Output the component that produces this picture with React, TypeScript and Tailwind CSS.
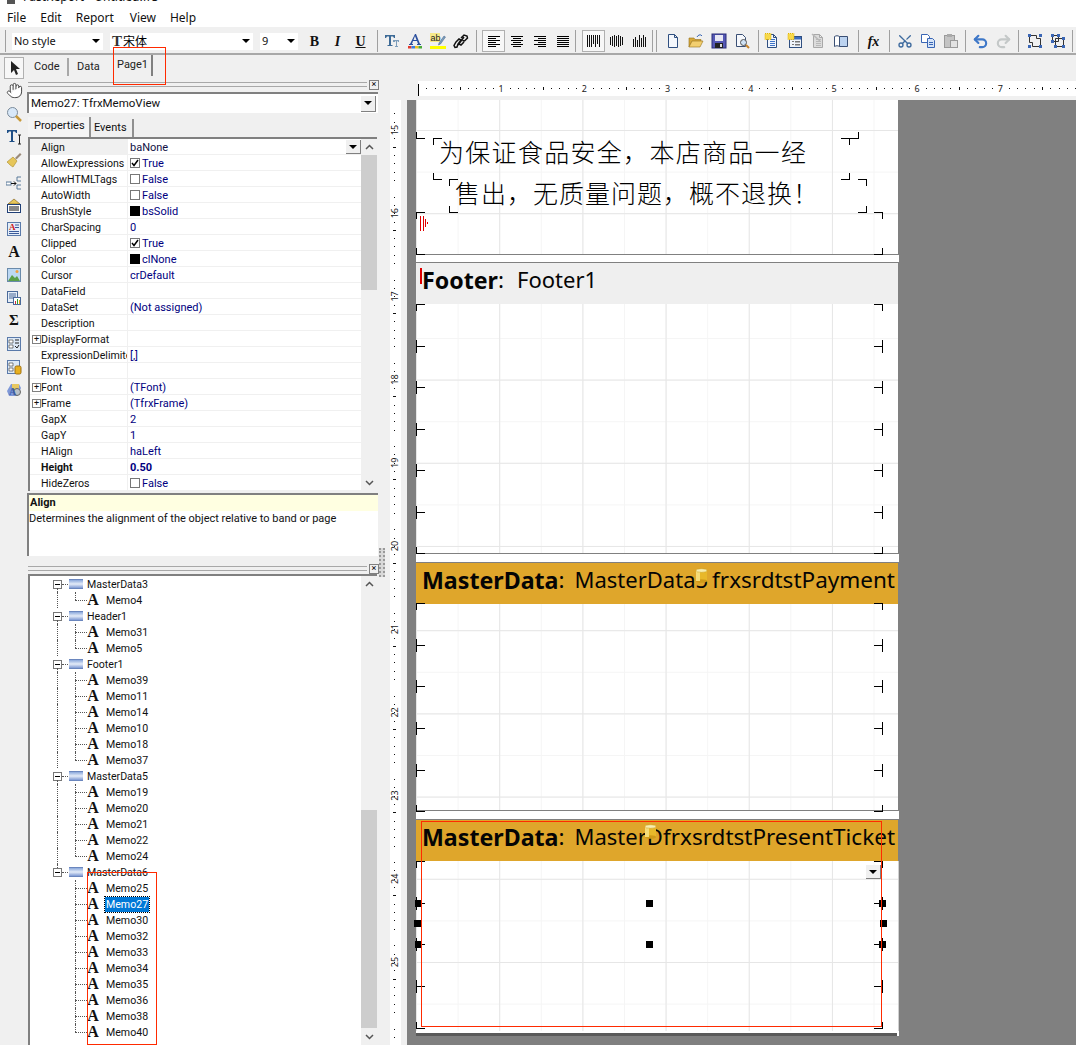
import type { ReactNode } from 'react'
import { Hand, Undo2, Redo2, Scissors } from 'lucide-react'

const GRID =
  'bg-[linear-gradient(to_right,#e6e6e6_1px,transparent_1px),linear-gradient(to_bottom,#e6e6e6_1px,transparent_1px),linear-gradient(to_right,#f5f5f5_1px,transparent_1px),linear-gradient(to_bottom,#f5f5f5_1px,transparent_1px)] bg-[size:83.2px_83.2px,83.2px_83.2px,41.6px_41.6px,41.6px_41.6px]'

function Ico({ children, size = 16 }: { children: ReactNode; size?: number }) {
  return (
    <svg width={size} height={size} viewBox="0 0 16 16" className="block">
      {children}
    </svg>
  )
}

function Btn({ children, active }: { children: ReactNode; active?: boolean }) {
  return (
    <div
      className={
        'w-[23px] h-[22px] shrink-0 flex items-center justify-center ' +
        (active ? 'bg-[#f7f7f7] border border-[#b0b0b0]' : '')
      }
    >
      {children}
    </div>
  )
}

function Sep({ className }: { className: string }) {
  return <div className={'w-px h-[22px] shrink-0 bg-[#a0a0a0] ' + className} />
}

function Arrow() {
  return <div className="w-0 h-0 border-x-[4px] border-x-transparent border-t-[4px] border-t-black" />
}

function Combo({ className, children }: { className: string; children: ReactNode }) {
  return (
    <div className={'h-[17px] bg-white flex items-center justify-between pr-[3px] shrink-0 ' + className}>
      <div className="flex items-center pl-[2px] text-[11px] text-[#111]">{children}</div>
      <Arrow />
    </div>
  )
}

function AlignIcon({ kind }: { kind: 'l' | 'c' | 'r' | 'j' }) {
  const rows = [12, 8, 12, 8, 12, 8]
  return (
    <Ico>
      {rows.map((w, i) => {
        const width = kind === 'j' ? 12 : w
        const x = kind === 'l' || kind === 'j' ? 2 : kind === 'c' ? 8 - width / 2 : 14 - width
        return <rect key={i} x={x} y={3 + i * 2} width={width} height={1} fill="#000" />
      })}
    </Ico>
  )
}

function BarIcon({ bars }: { bars: number[][] }) {
  return (
    <Ico>
      {bars.map(([x, y, h, w], i) => (
        <rect key={i} x={x} y={y} width={w} height={h} fill="#111" />
      ))}
    </Ico>
  )
}

function Doc({ fill = '#fff', stroke = '#2f4f80' }: { fill?: string; stroke?: string }) {
  return <path d="M3.5 1.5h6l3 3v10h-9z M9.5 1.5v3h3" fill={fill} stroke={stroke} />
}

function Star() {
  return <rect x="1" y="0.5" width="6" height="6" fill="#f7d94c" stroke="#e2b400" strokeDasharray="1 1" />
}

function Lines({ color = '#3f74c8' }: { color?: string }) {
  return (
    <>
      <rect x="6" y="6" width="5" height="1" fill={color} />
      <rect x="6" y="8" width="5" height="1" fill={color} />
      <rect x="6" y="10" width="5" height="1" fill={color} />
      <rect x="6" y="12" width="5" height="1" fill={color} />
    </>
  )
}

function GroupIcon({ split }: { split?: boolean }) {
  const pts = split
    ? [[1, 1], [7, 1], [1, 7], [12, 4], [4, 12], [12, 12]]
    : [[1, 1], [12, 1], [1, 12], [12, 12]]
  return (
    <Ico>
      {split ? (
        <path d="M2.5 2.5h6v6h-6z M5.5 5.5h8v8h-8z" fill="none" stroke="#333" />
      ) : (
        <path d="M2.5 2.5h7v3h4v8h-8v-4h-3z" fill="none" stroke="#333" />
      )}
      {pts.map(([x, y], i) => (
        <rect key={i} x={x} y={y} width={3} height={3} fill="#3a66b5" />
      ))}
    </Ico>
  )
}

function Toolbar() {
  return (
    <div className="h-[28px] shrink-0 flex items-center pt-[2px] border-b-2 border-[#a8a8a8] bg-[#f0f0f0]">
      <div className="ml-[5px] mr-[5px] w-[2px] h-[22px] border-l border-[#a0a0a0] shrink-0" />
      <Combo className="w-[91px]">No style</Combo>
      <Combo className="w-[143px] ml-[7px]">
        <span className="text-[15px] leading-none font-bold text-[#333] [font-family:'Liberation_Serif',serif] mr-px">T</span>
        <span className="text-[12px] text-black [font-family:'Noto_Sans_CJK_SC',sans-serif]">宋体</span>
      </Combo>
      <Combo className="w-[38px] ml-[7px]">9</Combo>
      <div className="w-[5px] shrink-0" />
      <Btn><span className="[font-family:'Liberation_Serif',serif] font-bold text-[14px] text-[#111]">B</span></Btn>
      <Btn><span className="[font-family:'Liberation_Serif',serif] font-bold italic text-[14px] text-[#111]">I</span></Btn>
      <Btn><span className="[font-family:'Liberation_Serif',serif] font-bold underline text-[14px] text-[#111]">U</span></Btn>
      <Sep className="ml-[5px] mr-[2px]" />
      <Btn>
        <Ico>
          <path d="M1 2h10v3h-1l-1-1.500H7V12h1.500v1h-5v-1H5V3.500H3L2 5H1z" fill="#3d6a96" />
          <path d="M9 7h6v2h-1l-.5-1H13v5h1v1h-3v-1h1V8h-.5L11 9h-2z" fill="#7d9dbb" />
        </Ico>
      </Btn>
      <Btn>
        <Ico>
          <path d="M8 1h1l4 10h1v1h-4v-1h1l-1-3H6l-1 3h1v1H2v-1h1zM6.500 7h3L8 3z" fill="#2b4f9e" />
          <rect x="1" y="13" width="3.500" height="2.500" fill="#e23b2e" />
          <rect x="4.500" y="13" width="3.500" height="2.500" fill="#3a7de0" />
          <rect x="8" y="13" width="3.500" height="2.500" fill="#f0c020" />
          <rect x="11.500" y="13" width="3.500" height="2.500" fill="#4caa3a" />
        </Ico>
      </Btn>
      <Btn>
        <svg width="16" height="16" viewBox="0 0 16 16" className="block">
          <rect x="0" y="0" width="10" height="9" fill="#f6e98a" />
          <text x="0.5" y="8" fontSize="9" fill="#222" fontFamily="'Liberation Sans',sans-serif">ab</text>
          <path d="M9 10l5-7 1.500 1-5 7-2 1z" fill="#7d9dbb" stroke="#3d5f88" strokeWidth=".5" />
          <rect x="0" y="13" width="16" height="3" fill="#ffff00" />
        </svg>
      </Btn>
      <Btn>
        <Ico>
          <path d="M5 12l6-8M3 9l3-3 2 1-3 4-1 3-2 .5-1-2zM8 5l3-3 3 1 .5 2-3 3-2-.5M6 11l2 1 3-3" fill="none" stroke="#111" strokeWidth="1.500" />
        </Ico>
      </Btn>
      <Sep className="ml-[4px] mr-[5px]" />
      <Btn active><AlignIcon kind="l" /></Btn>
      <Btn><AlignIcon kind="c" /></Btn>
      <Btn><AlignIcon kind="r" /></Btn>
      <Btn><AlignIcon kind="j" /></Btn>
      <Sep className="ml-[1px] mr-[6px]" />
      <Btn active>
        <BarIcon bars={[[1, 2, 12, 1], [3, 2, 12, 1], [5, 2, 12, 1], [7, 2, 9, 1], [9, 2, 12, 1], [11, 2, 9, 1], [13, 2, 12, 1]]} />
      </Btn>
      <Btn>
        <BarIcon bars={[[1, 4, 8, 1], [3, 3, 10, 1], [5, 2, 12, 1], [7, 3, 10, 1], [9, 2, 12, 1], [11, 3, 10, 1], [13, 4, 8, 1]]} />
      </Btn>
      <Btn>
        <BarIcon bars={[[1, 6, 8, 1], [3, 4, 10, 1], [5, 7, 7, 1], [7, 2, 12, 1], [9, 5, 9, 1], [11, 2, 12, 1], [13, 4, 10, 1]]} />
      </Btn>
      <Sep className="ml-[1px] mr-[3px]" />
      <div className="w-[2px] h-[22px] border-l border-[#a0a0a0] mr-[3px] shrink-0" />
      <Btn><Ico><Doc fill="#f4f7fc" /></Ico></Btn>
      <Btn>
        <Ico>
          <path d="M1 5h5l1 1.500h6v2H4L1 14z" fill="#d8a93a" stroke="#96711a" strokeWidth=".6" />
          <path d="M4 8h11l-3 6H1z" fill="#f3cf6f" stroke="#96711a" strokeWidth=".6" />
          <path d="M9 4c1-2 3-2.500 4-2l1 1" fill="none" stroke="#3a66b5" />
        </Ico>
      </Btn>
      <Btn>
        <Ico>
          <rect x="1" y="1" width="14" height="14" fill="#5558b5" stroke="#2a2c78" />
          <rect x="4" y="2" width="8" height="6" fill="#e8e8f4" />
          <rect x="4" y="10" width="8" height="5" fill="#222" />
          <rect x="9" y="11" width="2" height="3" fill="#ddd" />
        </Ico>
      </Btn>
      <Btn>
        <Ico>
          <path d="M2.500 1.500h6l3 3v9h-9z" fill="#f6f8fc" stroke="#3a4f74" />
          <circle cx="9.500" cy="9.500" r="3" fill="#cfe2f5" stroke="#555" />
          <path d="M12 12l3 3" stroke="#c8842a" strokeWidth="2" />
        </Ico>
      </Btn>
      <Sep className="ml-[5px] mr-[1px]" />
      <Btn><Ico><Doc fill="#f1f6fd" /><Lines /><Star /></Ico></Btn>
      <Btn>
        <Ico>
          <rect x="2.500" y="3.500" width="12" height="11" fill="#f0f4fa" stroke="#2f4f80" />
          <rect x="3" y="4" width="11" height="2.500" fill="#3a6cc0" />
          <rect x="5" y="8" width="2" height="1" fill="#777" />
          <rect x="8" y="8" width="5" height="1.500" fill="#777" />
          <rect x="5" y="11" width="2" height="1" fill="#777" />
          <rect x="8" y="11" width="5" height="1.500" fill="#777" />
          <Star />
        </Ico>
      </Btn>
      <Btn>
        <Ico>
          <Doc fill="#dcdcdc" stroke="#a8a8a8" />
          <Lines color="#b8b8b8" />
          <path d="M2 1l8 7" stroke="#b8b8b8" strokeWidth="1.500" />
        </Ico>
      </Btn>
      <Btn>
        <Ico>
          <path d="M1.500 3.500c2-1 3-1 5 0v10c-2-1-3-1-5 0z" fill="#fff" stroke="#3a4f74" />
          <path d="M6.500 3.500h8v10h-8z" fill="#bcd3f0" stroke="#3a4f74" />
        </Ico>
      </Btn>
      <Sep className="ml-[6px] mr-[3px]" />
      <Btn>
        <span className="[font-family:'Liberation_Serif',serif] italic font-bold text-[14px] text-[#111]">fx</span>
      </Btn>
      <Sep className="ml-[4px] mr-[3px]" />
      <Btn><Scissors size={16} color="#3d6a9e" strokeWidth={2} className="-rotate-90" /></Btn>
      <Btn>
        <Ico>
          <path d="M1.500 1.500h6l2 2v6h-8z" fill="#fff" stroke="#3a66b5" />
          <path d="M7.500 5.500h5l2 2v7h-7z" fill="#d5e4f8" stroke="#3a66b5" />
          <rect x="9" y="9" width="4" height="1" fill="#3a66b5" />
          <rect x="9" y="11" width="4" height="1" fill="#3a66b5" />
        </Ico>
      </Btn>
      <Btn>
        <Ico>
          <rect x="1.500" y="2.500" width="10" height="12" fill="#c4c4c4" stroke="#9a9a9a" />
          <rect x="4" y="1" width="5" height="3" fill="#aaa" />
          <rect x="7.500" y="7.500" width="7" height="7" fill="#e2e2e2" stroke="#9a9a9a" />
        </Ico>
      </Btn>
      <Sep className="ml-[3px] mr-[3px]" />
      <Btn><Undo2 size={17} color="#3f78c8" strokeWidth={3} /></Btn>
      <Btn><Redo2 size={17} color="#c4c8c8" strokeWidth={3} /></Btn>
      <Sep className="ml-[3px] mr-[4px]" />
      <Btn><GroupIcon /></Btn>
      <Btn><GroupIcon split /></Btn>
      <Sep className="ml-[3px]" />
    </div>
  )
}

function ToolItem({ children, active }: { children: ReactNode; active?: boolean }) {
  return (
    <div
      className={
        'w-[20px] flex items-center justify-center shrink-0 ' +
        (active ? 'h-[22px] bg-[#f7f7f7] border border-[#b0b0b0]' : 'h-[23px]')
      }
    >
      {children}
    </div>
  )
}

function LeftTools() {
  return (
    <div className="w-[27px] shrink-0 flex flex-col pt-[2px] pl-[4px]">
      <ToolItem active>
        <Ico><path d="M5 1v12l3-3 2 5 2-1-2-5h4z" fill="#222" /></Ico>
      </ToolItem>
      <ToolItem><Hand size={17} color="#444" fill="#fff" strokeWidth={1.4} /></ToolItem>
      <ToolItem>
        <Ico>
          <circle cx="6.500" cy="6.500" r="5" fill="#d8e8f8" stroke="#7a8a9a" />
          <path d="M10 10l5 5" stroke="#c89a3a" strokeWidth="2.500" />
        </Ico>
      </ToolItem>
      <ToolItem>
        <Ico>
          <path d="M1 1h10v3h-1L9 2.500H7V12h1.500v1h-5v-1H5V2.500H3L2 4H1z" fill="#1f4f86" />
          <path d="M12 6h3M13.500 6v9M12 15h3" stroke="#222" fill="none" />
        </Ico>
      </ToolItem>
      <ToolItem>
        <Ico>
          <path d="M9 6l5-5 1.500 1.500-5 5z" fill="#9a8a7a" />
          <path d="M1 10l6-5 4 4-4 6c-2-1-4-3-6-5z" fill="#e6c65a" stroke="#a88a2a" strokeWidth=".6" />
        </Ico>
      </ToolItem>
      <ToolItem>
        <Ico>
          <rect x="0" y="7" width="5" height="3" fill="#fff" stroke="#5a7a9a" />
          <path d="M5 8.500h5M8 6.500l2 2-2 2" stroke="#111" fill="none" />
          <path d="M15 2h-4v4h4M15 10h-4v4h4" stroke="#5a7a9a" fill="none" />
        </Ico>
      </ToolItem>
      <ToolItem>
        <Ico>
          <path d="M8 1l6 5H2z" fill="#e6c65a" stroke="#7a5a1a" strokeWidth=".6" />
          <rect x="1.500" y="6.500" width="13" height="8" fill="#fff" stroke="#1f3f76" />
          <path d="M4 8v5M6 8v5M8 8v5M10 8v5M12 8v5" stroke="#111" />
        </Ico>
      </ToolItem>
      <ToolItem>
        <Ico>
          <rect x="1.500" y="1.500" width="13" height="13" fill="#e4edf8" stroke="#5a7aaa" />
          <text x="3" y="9" fontSize="9" fontWeight="bold" fill="#d02020" fontFamily="'Liberation Serif',serif">A</text>
          <path d="M9 4h4M9 6.500h4M3 10.500h10M3 12.500h10" stroke="#3a5a9a" />
        </Ico>
      </ToolItem>
      <ToolItem>
        <span className="[font-family:'Liberation_Serif',serif] font-bold text-[16px] leading-none text-[#111]">A</span>
      </ToolItem>
      <ToolItem>
        <Ico>
          <rect x="1.500" y="1.500" width="13" height="13" fill="#bcd8f4" stroke="#6a8aaa" />
          <path d="M2 14l4-6 3 3 2-2 3 5z" fill="#5aa04a" />
          <circle cx="11" cy="4.500" r="1.500" fill="#f0a040" />
        </Ico>
      </ToolItem>
      <ToolItem>
        <Ico>
          <rect x="1.500" y="1.500" width="10" height="11" fill="#e4edf8" stroke="#4a6a9a" />
          <path d="M3 4h7M3 6h7M3 8h4" stroke="#4a6a9a" />
          <rect x="7.500" y="7.500" width="7" height="7" fill="#fff" stroke="#4a6a9a" />
          <rect x="9" y="11" width="1" height="3" fill="#d03030" />
          <rect x="11" y="9" width="1" height="5" fill="#30a030" />
          <rect x="13" y="10" width="1" height="4" fill="#e0a020" />
        </Ico>
      </ToolItem>
      <ToolItem>
        <span className="[font-family:'Liberation_Serif',serif] font-bold text-[15px] leading-none text-[#111]">Σ</span>
      </ToolItem>
      <ToolItem>
        <Ico>
          <rect x="1.500" y="1.500" width="13" height="13" fill="#dce8f6" stroke="#5a7aaa" />
          <path d="M3 4h4v3H3zM3 9h4v3H3z" fill="#fff" stroke="#333" strokeWidth=".6" />
          <path d="M9 4h4M9 7h4M9 10l2 2 2-3" stroke="#222" fill="none" />
        </Ico>
      </ToolItem>
      <ToolItem>
        <Ico>
          <rect x="1.500" y="1.500" width="12" height="13" fill="#dce8f6" stroke="#5a7aaa" />
          <path d="M3 4h4v3H3zM3 9h4v3H3z" fill="#fff" stroke="#333" strokeWidth=".6" />
          <rect x="9" y="7" width="6" height="8" rx="1.500" fill="#e8b020" stroke="#a07010" />
        </Ico>
      </ToolItem>
      <ToolItem>
        <Ico>
          <path d="M5 2h8l2 4-4 8H3L1 9z" fill="#7e98d8" />
          <path d="M6 2h7v6H6z" fill="#e8c860" />
          <circle cx="11" cy="10" r="3.500" fill="#b8c0c8" stroke="#666" />
          <text x="3" y="13" fontSize="10" fontWeight="bold" fill="#3a5aa8" fontFamily="'Liberation Serif',serif">A</text>
        </Ico>
      </ToolItem>
    </div>
  )
}

function PaneHeader() {
  return (
    <div className="h-[11px] flex items-center">
      <div className="ml-px w-[339px] h-[5px] border-y border-[#a8a8a8] shrink-0" />
      <div className="ml-[2px] w-[10px] h-[10px] border border-[#808080] bg-[#f0f0f0] flex items-center justify-center text-[9px] leading-none text-black">
        ×
      </div>
    </div>
  )
}

function ScrollBar({ before, thumb, after }: { before: string; thumb: string; after: string }) {
  return (
    <div className="w-[16px] shrink-0 flex flex-col bg-[#f0f0f0]">
      <div className="h-[16px] flex items-center justify-center shrink-0">
        <svg width="9" height="6" viewBox="0 0 9 6"><path d="M1 5l3.500-3.500L8 5" stroke="#555" strokeWidth="1.500" fill="none" /></svg>
      </div>
      <div className={before} />
      <div className={'bg-[#cdcdcd] ' + thumb} />
      <div className={after} />
      <div className="h-[16px] flex items-center justify-center shrink-0">
        <svg width="9" height="6" viewBox="0 0 9 6"><path d="M1 1l3.500 3.500L8 1" stroke="#555" strokeWidth="1.500" fill="none" /></svg>
      </div>
    </div>
  )
}

type Prop = { name: string; value?: string; kind?: 'on' | 'off' | 'swatch'; plus?: boolean; bold?: boolean }

const PROPS: Prop[] = [
  { name: 'Align', value: 'baNone' },
  { name: 'AllowExpressions', value: 'True', kind: 'on' },
  { name: 'AllowHTMLTags', value: 'False', kind: 'off' },
  { name: 'AutoWidth', value: 'False', kind: 'off' },
  { name: 'BrushStyle', value: 'bsSolid', kind: 'swatch' },
  { name: 'CharSpacing', value: '0' },
  { name: 'Clipped', value: 'True', kind: 'on' },
  { name: 'Color', value: 'clNone', kind: 'swatch' },
  { name: 'Cursor', value: 'crDefault' },
  { name: 'DataField' },
  { name: 'DataSet', value: '(Not assigned)' },
  { name: 'Description' },
  { name: 'DisplayFormat', plus: true },
  { name: 'ExpressionDelimiters', value: '[,]' },
  { name: 'FlowTo' },
  { name: 'Font', value: '(TFont)', plus: true },
  { name: 'Frame', value: '(TfrxFrame)', plus: true },
  { name: 'GapX', value: '2' },
  { name: 'GapY', value: '1' },
  { name: 'HAlign', value: 'haLeft' },
  { name: 'Height', value: '0.50', bold: true },
  { name: 'HideZeros', value: 'False', kind: 'off' },
]

function PropRow({ p, first }: { p: Prop; first: boolean }) {
  return (
    <div className="h-[16px] flex border-b border-[#f0f0f0] leading-[15px]">
      <div
        className={
          'w-[97px] shrink-0 overflow-hidden whitespace-nowrap flex items-center pl-[2px] pt-px text-[10.6px] text-[#111] ' +
          (first ? 'bg-[#f0f0f0] ' : '') +
          (p.bold ? 'font-bold' : '')
        }
      >
        {p.plus ? (
          <div className="w-[9px] h-[9px] border border-[#808080] shrink-0 flex items-center justify-center text-[9px] leading-none">
            +
          </div>
        ) : (
          <div className="w-[9px] shrink-0" />
        )}
        <span>{p.name}</span>
      </div>
      <div className={'relative flex-1 border-l border-[#f0f0f0] flex items-center pl-[2px] pt-px text-[#000080] ' + (p.bold ? 'font-bold' : '')}>
        {p.kind === 'on' && (
          <div className="w-[10px] h-[10px] border border-[#777] mr-[2px] flex items-center justify-center">
            <svg width="8" height="8" viewBox="0 0 8 8"><path d="M1 4l2 2.500L7 1" stroke="#000" strokeWidth="1.500" fill="none" /></svg>
          </div>
        )}
        {p.kind === 'off' && <div className="w-[10px] h-[10px] border border-[#777] mr-[2px]" />}
        {p.kind === 'swatch' && <div className="w-[10px] h-[10px] bg-black mr-[2px]" />}
        <span className={first ? 'text-[#111144]' : ''}>{p.value}</span>
        {first && (
          <div className="absolute right-0 top-px w-[15px] h-[14px] bg-[#f0f0f0] border-r border-b border-[#808080] flex items-center justify-center">
            <Arrow />
          </div>
        )}
      </div>
    </div>
  )
}

type Node = { label: string; parent?: boolean; last?: boolean; selected?: boolean }

const TREE: Node[] = [
  { label: 'MasterData3', parent: true },
  { label: 'Memo4', last: true },
  { label: 'Header1', parent: true },
  { label: 'Memo31' },
  { label: 'Memo5', last: true },
  { label: 'Footer1', parent: true },
  { label: 'Memo39' },
  { label: 'Memo11' },
  { label: 'Memo14' },
  { label: 'Memo10' },
  { label: 'Memo18' },
  { label: 'Memo37', last: true },
  { label: 'MasterData5', parent: true },
  { label: 'Memo19' },
  { label: 'Memo20' },
  { label: 'Memo21' },
  { label: 'Memo22' },
  { label: 'Memo24', last: true },
  { label: 'MasterData6', parent: true },
  { label: 'Memo25' },
  { label: 'Memo27', selected: true },
  { label: 'Memo30' },
  { label: 'Memo32' },
  { label: 'Memo33' },
  { label: 'Memo34' },
  { label: 'Memo35' },
  { label: 'Memo36' },
  { label: 'Memo38' },
  { label: 'Memo40', last: true },
]

function TreeRow({ node, open }: { node: Node; open: boolean }) {
  if (node.parent) {
    return (
      <div className="relative h-[16px] flex items-center text-[#111] text-[10.6px]">
        {open && <div className="absolute left-[27px] top-[12px] h-[4px] border-l border-dotted border-[#555]" />}
        {!open && <div className="absolute left-[27px] top-0 h-[4px] border-l border-dotted border-[#555]" />}
        <div className="ml-[23px] w-[9px] h-[9px] border border-[#777] bg-white flex items-center justify-center shrink-0">
          <div className="w-[5px] h-px bg-black" />
        </div>
        <div className="w-[6px] border-t border-dotted border-[#555] shrink-0" />
        <div className="ml-px w-[14px] h-[10px] bg-[linear-gradient(to_bottom,#8aa8dc,#e4ecf8_50%,#7e9ad4)] border-y border-[#6a86be] shrink-0" />
        <span className="ml-[4px] pt-px">{node.label}</span>
      </div>
    )
  }
  return (
    <div className="relative h-[16px] flex items-center text-[#111] text-[10.6px]">
      {open && <div className="absolute left-[27px] top-0 h-[16px] border-l border-dotted border-[#555]" />}
      <div className={'absolute left-[45px] top-0 border-l border-dotted border-[#555] ' + (node.last ? 'h-[8px]' : 'h-[16px]')} />
      <div className="ml-[45px] w-[12px] border-t border-dotted border-[#555] shrink-0" />
      <span className="w-[12px] shrink-0 text-center [font-family:'Liberation_Serif',serif] font-bold text-[16px] leading-none text-[#111]">A</span>
      <span
        className={
          'ml-[6px] px-px h-[15px] pt-px leading-[14px] ' +
          (node.selected ? 'bg-[#0078d7] text-white outline-1 outline-dotted outline-black' : '')
        }
      >
        {node.label}
      </span>
    </div>
  )
}

function Panel() {
  const lastParent = TREE.map((n) => !!n.parent).lastIndexOf(true)
  return (
    <div className="w-[363px] shrink-0 flex flex-col text-[11px] h-full [font-family:Roboto,sans-serif]">
      <div className="h-[21px] flex items-end text-[11px] text-[#222] pl-[3px] shrink-0">
        <div className="w-[39px] h-[18px] border-r-2 border-[#a8a8a8] bg-[#f0f0f0] flex items-center pl-[4px]">Code</div>
        <div className="w-[41px] h-[18px] border-r-0 flex items-center pl-[8px]">Data</div>
        <div className="ml-[1px] w-[42px] h-[21px] border-r-2 border-[#808080] bg-[#f0f0f0] flex items-start pt-[2px] pl-[6px]">Page1</div>
      </div>
      <div className="mt-[3px] shrink-0"><PaneHeader /></div>
      <div className="mt-[2px] w-[351px] h-[21px] shrink-0 bg-white border-t-2 border-l-2 border-[#808080] flex items-center justify-between pl-[2px] pr-[2px] text-[11.500px] text-[#111]">
        <span>Memo27: TfrxMemoView</span>
        <div className="w-[15px] h-[16px] bg-[#f0f0f0] border-r border-b border-[#808080] flex items-center justify-center"><Arrow /></div>
      </div>
      <div className="mt-[4px] h-[20px] shrink-0 flex items-end pl-px text-[#111] text-[11px]">
        <div className="w-[63px] h-[20px] bg-[#f4f4f4] border-r-2 border-[#909090] flex items-start pt-[1px] pl-[6px]">Properties</div>
        <div className="w-[43px] h-[18px] border-r-2 border-[#909090] flex items-center pl-[3px]">Events</div>
      </div>
      <div className="w-[349px] ml-px h-[354px] shrink-0 border-t-2 border-l-2 border-[#808080] bg-white flex overflow-hidden">
        <div className="flex-1 min-w-0">
          {PROPS.map((p, i) => (
            <PropRow key={p.name} p={p} first={i === 0} />
          ))}
        </div>
        <ScrollBar before="h-0" thumb="h-[135px]" after="flex-1" />
      </div>
      <div className="mt-[2px] w-[351px] h-[63px] shrink-0 border-t-2 border-l-2 border-[#808080] bg-white text-[#111]">
        <div className="h-[16px] bg-[#ffffe1] font-bold pl-px pt-px leading-[14px]">Align</div>
        <div className="pt-px leading-[14px]">Determines the alignment of the object relative to band or page</div>
      </div>
      <div className="mt-[7px] shrink-0"><PaneHeader /></div>
      <div className="ml-px w-[349px] flex-1 min-h-0 border-t-2 border-l-2 border-[#808080] bg-white flex overflow-hidden">
        <div className="flex-1 min-w-0">
          {TREE.map((n, i) => (
            <TreeRow key={n.label} node={n} open={i < lastParent} />
          ))}
        </div>
        <ScrollBar before="h-[218px]" thumb="h-[218px]" after="flex-1" />
      </div>
    </div>
  )
}

function RulerTop() {
  const ticks = Array.from({ length: 80 }, (_, i) => i)
  return (
    <svg width="658" height="15" className="block">
      <rect x="0" y="3" width="1" height="12" fill="#000" />
      {ticks.map((k) => {
        if (k === 0 || k % 10 === 0) return null
        const x = Math.round(k * 8.32)
        return <rect key={k} x={x} y={k % 5 === 0 ? 6 : 7} width={1} height={k % 5 === 0 ? 3 : 1} fill="#111" />
      })}
      {[1, 2, 3, 4, 5, 6, 7].map((n) => (
        <text key={n} x={n * 83.2} y="11" fontSize="9" textAnchor="middle" fill="#222" fontFamily="'Noto Sans',sans-serif">
          {n}
        </text>
      ))}
    </svg>
  )
}

function RulerLeft() {
  const ticks = Array.from({ length: 118 }, (_, i) => i)
  return (
    <svg width="11" height="945" className="block">
      {ticks.map((k) => {
        if (k % 10 === 0) return null
        const y = Math.round(30 + (k - 3) * 8.32)
        return <rect key={k} x={k % 5 === 0 ? 3 : 4} y={y} width={k % 5 === 0 ? 3 : 1} height={1} fill="#111" />
      })}
      {Array.from({ length: 11 }, (_, i) => i).map((i) => {
        const y = 30 + i * 83.2
        return (
          <text key={i} x="5" y={y} fontSize="9" textAnchor="middle" fill="#222" fontFamily="'Noto Sans',sans-serif" transform={`rotate(-90 5 ${y}) translate(0 3)`}>
            {15 + i}
          </text>
        )
      })}
    </svg>
  )
}

type Corner = [number, number, 'tl' | 'tr' | 'bl' | 'br']

const CORNER_CLS = {
  tl: 'border-l border-t',
  tr: 'border-r border-t',
  bl: 'border-l border-b',
  br: 'border-r border-b',
}

function stack(ys: number[]): Corner[] {
  const out: Corner[] = []
  ys.forEach((y, i) => {
    if (i > 0) out.push([416, y, 'bl'], [882, y, 'br'])
    if (i < ys.length - 1) out.push([416, y, 'tl'], [882, y, 'tr'])
  })
  return out
}

const CORNERS: Corner[] = [
  [416, 138, 'bl'],
  [858, 138, 'br'],
  [433, 138, 'tl'],
  [849, 138, 'tr'],
  [433, 179, 'bl'],
  [849, 179, 'br'],
  [449, 179, 'tl'],
  [866, 179, 'tr'],
  [449, 212, 'bl'],
  [866, 212, 'br'],
  ...stack([212, 254]),
  ...stack([304, 345.6, 387, 428.8, 470, 512, 553]),
  ...stack([603, 645, 686, 728, 770, 811]),
  ...stack([861, 903, 944, 986, 1028]),
]

const HANDLES = [
  [649, 903],
  [649, 944],
  [418, 903],
  [417, 923],
  [418, 944],
  [882, 903],
  [883, 923],
  [882, 944],
]

function Cylinder({ x, y }: { x: number; y: number }) {
  return (
    <svg width="13" height="15" viewBox="0 0 13 15" className="absolute" style={{ left: x - 416, top: y - 100 }}>
      <rect x="1" y="2" width="11" height="11" fill="#e8b82a" />
      <ellipse cx="6.500" cy="13" rx="5.500" ry="1.800" fill="#d09a18" />
      <rect x="1" y="2" width="4" height="11" fill="#f6dc78" />
      <ellipse cx="6.500" cy="2.500" rx="5.500" ry="1.800" fill="#f8eeb0" stroke="#c8a028" strokeWidth=".5" />
    </svg>
  )
}

function BandHead({ title, left, right, bg, leftCls }: { title: string; left: string; right?: string; bg: string; leftCls: string }) {
  return (
    <div className={'h-[42px] border-t border-r border-[#808080] flex items-center pl-[6px] pr-[3px] pb-[7px] text-[22.500px] leading-[1.3] text-[#050505] whitespace-nowrap overflow-hidden [font-family:\'Noto_Sans\',sans-serif] ' + bg}>
      <div className="flex flex-1 min-w-0 overflow-hidden">
        <span className="font-bold text-[23.200px]">{title}</span>
        <span>:</span>
        <span className={'text-[22px] ' + leftCls}>{left}</span>
      </div>
      {right && <span className="shrink-0">{right}</span>}
    </div>
  )
}

function Sheet() {
  return (
    <div className="relative w-[483px] h-[936px] bg-white shrink-0">
      <div className={'h-[155px] border-r border-b border-[#808080] ' + GRID + ' bg-[position:0_30px]'}>
        <div className="pt-[31px] pl-[23px] [font-family:'Noto_Sans_CJK_SC',sans-serif] font-light text-[25px] leading-[41px] text-black tracking-[1.3px] whitespace-nowrap">
          <div>为保证食品安全，本店商品一经</div>
          <div className="pl-[16px] tracking-[1px]">售出，无质量问题，概不退换！</div>
        </div>
      </div>
      <div className="h-[7px]" />
      <BandHead title="Footer" left="Footer1" bg="bg-[#efefef]" leftCls="ml-[13px]" />
      <div className={'h-[250px] border-r border-b border-[#808080] ' + GRID + ' bg-[position:0_75.6px]'} />
      <div className="h-[8px]" />
      <BandHead title="MasterData" left="MasterData5" right="frxsrdtstPayment" bg="bg-[#dfa62b]" leftCls="ml-[10px]" />
      <div className={'h-[207px] border-r border-b border-[#808080] ' + GRID + ' bg-[position:0_26.2px]'} />
      <div className="h-[8px]" />
      <BandHead title="MasterData" left="MasterD" right="frxsrdtstPresentTicket" bg="bg-[#dfa62b]" leftCls="ml-[10px]" />
      <div className={'h-[170px] border-r border-[#d0d0d0] ' + GRID + ' bg-[position:0_17.8px]'} />
      <div className="h-[2px] bg-white" />
      <div className="w-[481px] h-[3px] bg-[#5a5a5a]" />

      {CORNERS.map(([x, y, t], i) => (
        <div
          key={i}
          className={'absolute w-[9px] h-[7px] border-black ' + CORNER_CLS[t]}
          style={{
            left: t === 'tl' || t === 'bl' ? x - 416 : x - 416 - 8,
            top: t === 'tl' || t === 'tr' ? y - 100 : y - 100 - 6,
          }}
        />
      ))}
      {HANDLES.map(([x, y], i) => (
        <div key={i} className="absolute w-[7px] h-[7px] bg-black" style={{ left: x - 416 - 3, top: y - 100 - 3 }} />
      ))}
      <div className="absolute left-[4px] top-[116px] w-[8px] h-[15px] border-l border-[#e00000]">
        <div className="absolute left-[2px] top-0 w-px h-[15px] bg-[#e00000]" />
        <div className="absolute left-[4px] top-[3px] w-px h-[8px] bg-[#e00000]" />
        <div className="absolute left-[6px] top-[6px] w-px h-[2px] bg-[#e00000]" />
      </div>
      <div className="absolute left-[4px] top-[168px] w-[6px] h-[16px] border-l-2 border-[#e00000]" />
      <Cylinder x={695} y={568} />
      <Cylinder x={644} y={824} />
      <div className="absolute left-[450px] top-[765px] w-[15px] h-[14px] bg-[#f0f0f0] border-r border-b border-[#808080] flex items-center justify-center">
        <Arrow />
      </div>
      <div className="absolute left-[5px] top-[721px] w-[461px] h-[206px] border border-[#ff2a00]" />
    </div>
  )
}

function Design() {
  return (
    <div className="flex-1 min-w-0 flex flex-col pt-[26px] overflow-hidden">
      <div className="ml-[28px] h-[15px] bg-white shrink-0 overflow-hidden">
        <RulerTop />
      </div>
      <div className="h-[4px] shrink-0" />
      <div className="flex flex-1 min-h-0">
        <div className="w-[11px] bg-white shrink-0 overflow-hidden">
          <RulerLeft />
        </div>
        <div className="w-[6px] shrink-0" />
        <div className="flex-1 bg-[#808080] pl-[9px] overflow-hidden">
          <Sheet />
        </div>
      </div>
    </div>
  )
}

export default function App() {
  return (
    <div className="relative w-[1076px] h-[1045px] overflow-hidden flex flex-col bg-[#f0f0f0] [font-family:'Noto_Sans',sans-serif]">
      <div className="h-[8px] bg-white overflow-hidden shrink-0 relative">
        <div className="absolute left-[7px] -top-[10px] w-[8px] h-[14px] bg-[#555]" />
        <span className="absolute left-[23px] -top-[10px] text-[12px] leading-[14px] text-[#111] whitespace-nowrap">FastReport - Untitled.fr3</span>
      </div>
      <div className="h-[19px] bg-white shrink-0 flex items-center gap-[14px] pl-[7px] text-[12px] text-[#111]">
        <span>File</span>
        <span>Edit</span>
        <span className="w-[40px]">Report</span>
        <span>View</span>
        <span>Help</span>
      </div>
      <Toolbar />
      <div className="flex flex-1 min-h-0">
        <LeftTools />
        <Panel />
        <Design />
      </div>
      <div className="absolute left-[379px] top-[548px] w-[6px] h-[29px] bg-[#d8d8d8] border-x-2 border-dotted border-[#999]" />
      <div className="absolute left-[113px] top-[47px] w-[53px] h-[38px] border border-[#ff2a00]" />
      <div className="absolute left-[87px] top-[872px] w-[70px] h-[173px] border border-[#ff2a00]" />
    </div>
  )
}
